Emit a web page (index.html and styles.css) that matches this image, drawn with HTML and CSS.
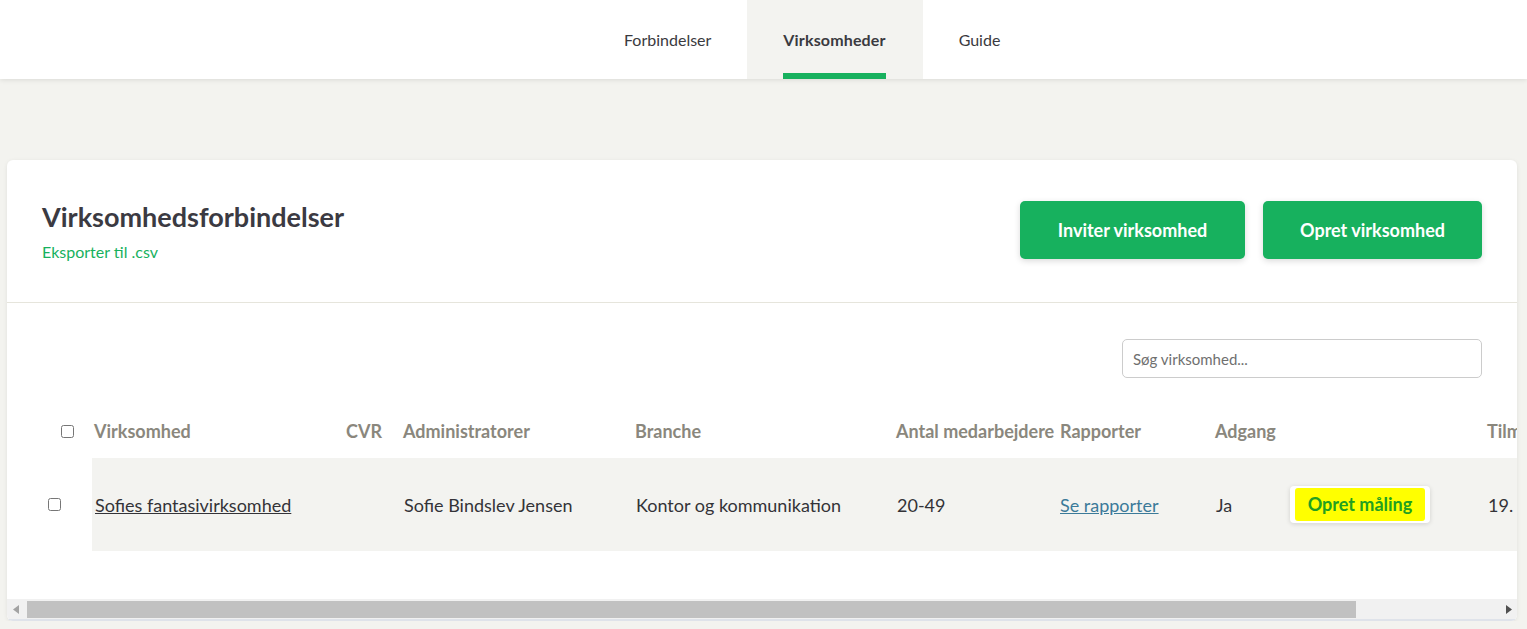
FILE: index.html
```html
<!DOCTYPE html>
<html lang="da">
<head>
    <meta charset="UTF-8">
    <meta name="viewport" content="width=device-width, initial-scale=1.0">
    <title>Virksomheder</title>
    <link rel="stylesheet" href="styles.css">
</head>
<body>
    <nav class="topnav">
        <div class="tabs">
            <a class="tab" href="#"><span>Forbindelser</span></a>
            <a class="tab active" href="#"><span>Virksomheder</span></a>
            <a class="tab" href="#"><span>Guide</span></a>
        </div>
    </nav>

    <main class="page">
        <section class="card">
            <div class="card-head">
                <div class="title-block">
                    <h1>Virksomhedsforbindelser</h1>
                    <a class="export-link" href="#">Eksporter til .csv</a>
                </div>
                <div class="actions">
                    <button class="btn btn-invite">Inviter virksomhed</button>
                    <button class="btn btn-create">Opret virksomhed</button>
                </div>
            </div>

            <div class="card-body">
                <div class="toolbar">
                    <input class="search" type="text" placeholder="Søg virksomhed...">
                </div>

                <div class="table-scroll">
                    <table class="companies">
                        <colgroup>
                            <col style="width: 50px">
                            <col style="width: 252px">
                            <col style="width: 57px">
                            <col style="width: 232px">
                            <col style="width: 261px">
                            <col style="width: 164px">
                            <col style="width: 155px">
                            <col style="width: 75px">
                            <col style="width: 197px">
                            <col style="width: 200px">
                        </colgroup>
                        <thead>
                            <tr>
                                <th class="check-cell head-check"><input type="checkbox"></th>
                                <th>Virksomhed</th>
                                <th>CVR</th>
                                <th>Administratorer</th>
                                <th>Branche</th>
                                <th>Antal medarbejdere</th>
                                <th>Rapporter</th>
                                <th>Adgang</th>
                                <th></th>
                                <th>Tilmeldt</th>
                            </tr>
                        </thead>
                        <tbody>
                            <tr>
                                <td class="check-cell row-check"><input type="checkbox"></td>
                                <td><a class="company-link" href="#">Sofies fantasivirksomhed</a></td>
                                <td></td>
                                <td>Sofie Bindslev Jensen</td>
                                <td>Kontor og kommunikation</td>
                                <td>20-49</td>
                                <td><a class="report-link" href="#">Se rapporter</a></td>
                                <td>Ja</td>
                                <td><button class="measure-btn"><span>Opret måling</span></button></td>
                                <td>19. april 2023</td>
                            </tr>
                        </tbody>
                    </table>
                </div>

                <div class="scrollbar">
                    <div class="sb-arrow">
                        <svg width="6" height="9" viewBox="0 0 6 9"><polygon points="6,0 6,9 0,4.5" fill="#a3a3a3"/></svg>
                    </div>
                    <div class="sb-track">
                        <div class="sb-thumb"></div>
                    </div>
                    <div class="sb-arrow">
                        <svg width="6" height="9" viewBox="0 0 6 9"><polygon points="0,0 0,9 6,4.5" fill="#505050"/></svg>
                    </div>
                </div>
            </div>
        </section>
    </main>
</body>
</html>
```

FILE: styles.css
```css
body {
    margin: 0;
    font-family: Lato, 'Open Sans', sans-serif;
    background-color: #f3f3ef;
    color: #3a3a40;
}

.topnav {
    background-color: white;
    height: 79px;
    box-shadow: 0 1px 5px rgba(0,0,0,0.1);
    position: relative;
}

.tabs {
    display: flex;
    height: 100%;
    padding-left: 588px;
}

.tab {
    display: block;
    padding: 0 36px;
    height: 79px;
    font-size: 16px;
    color: #3a3a40;
    text-decoration: none;
}

.tab span {
    display: block;
    box-sizing: border-box;
    height: 79px;
    line-height: 79px;
}

.tab.active {
    padding: 0 37px 0 36px;
    background-color: #f3f3f0;
    font-weight: bold;
}

.tab.active span {
    line-height: 79px;
    letter-spacing: 0.15px;
    border-bottom: 6px solid #17b15e;
}

.page {
    padding: 81px 10px 0 7px;
}

.card {
    background-color: white;
    border-radius: 6px;
    box-shadow: 0 1px 4px rgba(0,0,0,0.08);
    overflow: hidden;
}

.card-head {
    display: flex;
    justify-content: space-between;
    align-items: flex-start;
    padding: 41px 35px 40px;
    border-bottom: 1px solid #e6e5dc;
}

.title-block h1 {
    margin: 0;
    font-size: 27px;
    line-height: 32px;
    font-weight: bold;
    color: #3b3a42;
}

.export-link {
    display: block;
    margin-top: 9px;
    font-size: 16px;
    line-height: 20px;
    color: #17b15e;
    text-decoration: none;
}

.actions {
    display: flex;
    gap: 18px;
}

.btn {
    height: 58px;
    padding: 0 36px;
    background-color: #17b15e;
    color: white;
    border: none;
    border-radius: 5px;
    font-family: Lato, sans-serif;
    font-size: 18px;
    font-weight: bold;
    box-shadow: 0 2px 6px rgba(0,0,0,0.15);
    cursor: pointer;
}

.btn-invite {
    width: 225px;
}

.btn-create {
    width: 219px;
}

.toolbar {
    display: flex;
    justify-content: flex-end;
    padding: 36px 35px 26px;
}

.search {
    width: 360px;
    height: 39px;
    box-sizing: border-box;
    padding: 0 10px;
    border: 1px solid #cccccc;
    border-radius: 5px;
    font-family: Lato, sans-serif;
    font-size: 15px;
    color: #333;
}

.search::placeholder {
    color: #6f6f6f;
}

.table-scroll {
    overflow: hidden;
}

.companies {
    margin-left: 35px;
    table-layout: fixed;
    width: 1643px;
    border-collapse: collapse;
    font-size: 18px;
    white-space: nowrap;
}

.companies th {
    height: 54px;
    padding: 0 0 0 2px;
    text-align: left;
    font-weight: bold;
    color: #8a877d;
}

.companies td {
    height: 93px;
    padding: 0 0 0 3px;
    background-color: #f3f3f0;
    color: #333338;
}

.companies td.check-cell {
    background-color: white;
}

.check-cell input {
    width: 13px;
    height: 13px;
    margin: 0;
    display: block;
}

.head-check input {
    margin-left: 17px;
}

.row-check input {
    margin-left: 3px;
}

.company-link {
    color: #333338;
    text-decoration: underline;
}

.report-link {
    margin-left: -1px;
    color: #3b7a99;
    text-decoration: underline;
}

.measure-btn {
    margin-left: -1px;
    width: 140px;
    height: 37px;
    padding: 2px 5px;
    background-color: white;
    border: none;
    border-radius: 4px;
    box-shadow: 0 1px 5px rgba(0,0,0,0.14);
    cursor: pointer;
}

.measure-btn span {
    display: block;
    height: 100%;
    line-height: 33px;
    background-color: #ffff00;
    border-radius: 3px;
    color: #22a020;
    font-family: Lato, sans-serif;
    font-size: 18px;
    font-weight: bold;
}

.scrollbar {
    display: flex;
    height: 20px;
    margin-top: 48px;
    background-color: #f1f1f1;
    border-bottom: 2px solid #dfe3ea;
}

.sb-arrow {
    width: 17px;
    display: flex;
    align-items: center;
    justify-content: center;
}

.sb-track {
    flex: 1;
    padding-top: 2px;
}

.sb-thumb {
    margin-left: 3px;
    width: 1329px;
    height: 17px;
    background-color: #c1c1c1;
}
```
